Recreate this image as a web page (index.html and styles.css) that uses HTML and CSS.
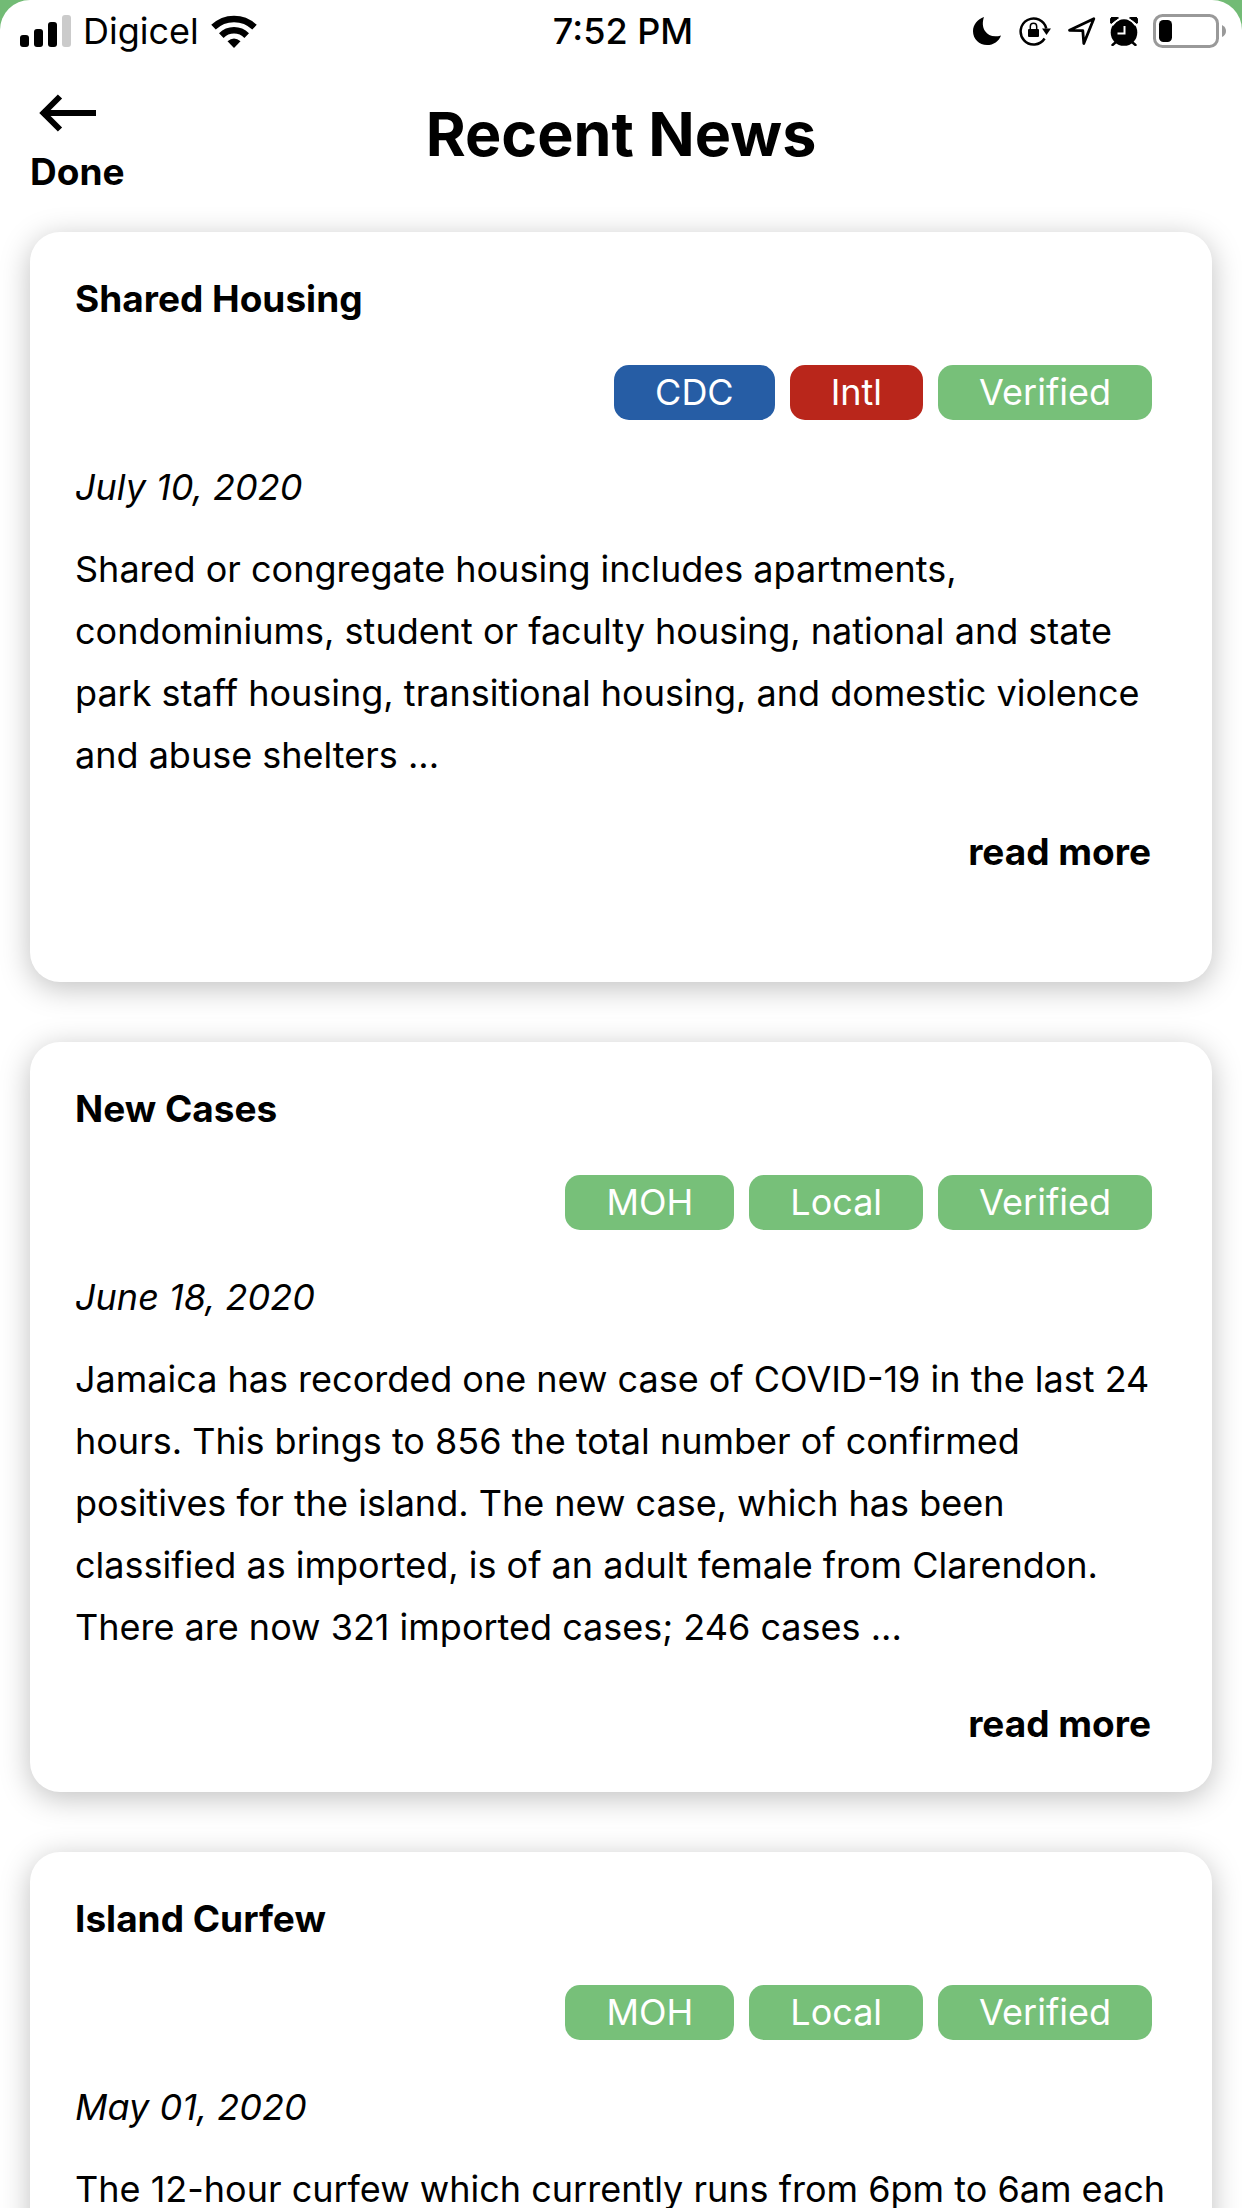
FILE: index.html
```html
<!DOCTYPE html>
<html lang="en">
<head>
<meta charset="utf-8">
<meta name="viewport" content="width=device-width, initial-scale=1">
<title>Recent News</title>
<link rel="stylesheet" href="styles.css">
</head>
<body>
<div class="screen">
  <div class="status">
    <div class="status-left">
      <svg class="signal" width="51" height="32" viewBox="0 0 51 32" aria-hidden="true">
        <rect x="0" y="20" width="9" height="12" rx="3"/>
        <rect x="14" y="14" width="9" height="18" rx="3"/>
        <rect x="28" y="7" width="9" height="25" rx="3"/>
        <rect x="42" y="0" width="9" height="32" rx="3" fill="#cbcbcb"/>
      </svg>
      <span class="carrier">Digicel</span>
      <svg width="46" height="33" viewBox="0 0 46 33" aria-hidden="true">
        <g fill="none" stroke="#000" stroke-width="6.5">
          <path d="M2.500 12.200A29.500 29.500 0 0 1 43.500 12.200"/>
          <path d="M10.300 20.600A18 18 0 0 1 35.700 20.600"/>
        </g>
        <path d="M16.500 26.300Q23 20.700 29.500 26.300L23 33Z"/>
      </svg>
    </div>
    <span class="clock">7:52 PM</span>
    <div class="status-right">
      <svg width="32" height="28" viewBox="0 0 32 28" aria-hidden="true">
        <path d="M11 0C4.500 2.200 0 7.600 0 14.300 0 22 6.200 28 14 28c6.500 0 12-3.800 14-9.600-7 2-12.800.5-16-4.400C9.300 10 9.300 4.800 11 0z"/>
      </svg>
      <svg width="35" height="30" viewBox="0 0 35 30" aria-hidden="true">
        <path d="M25.600 22.500A13 13 0 1 1 27.300 12.500" fill="none" stroke="#000" stroke-width="2.500"/>
        <path d="M23 12.500h9l-4.500 6.500z"/>
        <rect x="9" y="13" width="11" height="8" rx="1"/>
        <path d="M11.300 13.500v-3a3.200 3.200 0 0 1 6.400 0v3" fill="none" stroke="#000" stroke-width="1.500"/>
      </svg>
      <svg width="28" height="28" viewBox="0 0 28 28" aria-hidden="true">
        <path d="M1.500 13.300L25.800 1.800 15.800 26.500 14.800 13.600z" fill="none" stroke="#000" stroke-width="2.800" stroke-linejoin="round"/>
      </svg>
      <svg width="28" height="29" viewBox="0 0 28 29" aria-hidden="true">
        <circle cx="14" cy="15.500" r="13.300"/>
        <path d="M1 6.500A4.300 4.300 0 0 1 8.500 1zM27 6.500A4.300 4.300 0 0 0 19.500 1z" stroke="#000" stroke-width="1"/>
        <path d="M2.500 8.500Q5 4 10 2M25.500 8.500Q23 4 18 2" fill="none" stroke="#fff" stroke-width="1.400"/>
        <path d="M6 25l-3.500 3M22 25l3.500 3" stroke="#000" stroke-width="2.400" stroke-linecap="round"/>
        <path d="M14.500 9v7.500H7.500" fill="none" stroke="#fff" stroke-width="2"/>
      </svg>
      <svg class="battery" width="74" height="34" viewBox="0 0 74 34" aria-hidden="true">
        <rect x="2.500" y="1.500" width="63" height="31" rx="8" fill="none" stroke="#999" stroke-width="3"/>
        <rect x="7" y="6" width="13" height="22" rx="4.500"/>
        <path d="M70 11q4 2 4 6t-4 6z" fill="#999"/>
      </svg>
    </div>
  </div>

  <header class="header">
    <button class="back" type="button">
      <svg width="57" height="38" viewBox="0 0 57 38" aria-hidden="true">
        <path d="M21 2.500L4.500 19 21 35.500M5 19H57" fill="none" stroke="#000" stroke-width="6"/>
      </svg>
      <span>Done</span>
    </button>
    <h1 class="heading">Recent News</h1>
  </header>

  <main class="news">
    <article class="card">
      <h2 class="title">Shared Housing</h2>
      <div class="tags"><span class="tag blue">CDC</span><span class="tag red">Intl</span><span class="tag">Verified</span></div>
      <time class="date" datetime="2020-07-10">July 10, 2020</time>
      <p class="summary">Shared or congregate housing includes apartments,<br>condominiums, student or faculty housing, national and state<br>park staff housing, transitional housing, and domestic violence<br>and abuse shelters ...</p>
      <a class="more" href="#">read more</a>
    </article>
    <article class="card">
      <h2 class="title">New Cases</h2>
      <div class="tags"><span class="tag">MOH</span><span class="tag">Local</span><span class="tag">Verified</span></div>
      <time class="date" datetime="2020-06-18">June 18, 2020</time>
      <p class="summary">Jamaica has recorded one new case of COVID-19 in the last 24<br>hours. This brings to 856 the total number of confirmed<br>positives for the island. The new case, which has been<br>classified as imported, is of an adult female from Clarendon.<br>There are now 321 imported cases; 246 cases ...</p>
      <a class="more" href="#">read more</a>
    </article>
    <article class="card">
      <h2 class="title">Island Curfew</h2>
      <div class="tags"><span class="tag">MOH</span><span class="tag">Local</span><span class="tag">Verified</span></div>
      <time class="date" datetime="2020-05-01">May 01, 2020</time>
      <p class="summary">The 12-hour curfew which currently runs from 6pm to 6am each</p>
    </article>
  </main>
</div>
</body>
</html>
```
FILE: styles.css
```css
* { box-sizing: border-box; }

body {
  margin: 0;
  background: #72bb75;
  color: #000;
  font-family: Inter, "Liberation Sans", sans-serif;
  font-size: 36px;
  line-height: 44px;
}

svg { display: block; flex: none; }

.screen {
  display: flex;
  flex-direction: column;
  height: 100vh;
  overflow: hidden;
  background: #fff;
  border-radius: 30px 30px 0 0;
}

.status {
  display: grid;
  grid-template-columns: 1fr auto 1fr;
  align-items: center;
  flex: none;
  min-height: 62px;
  padding: 0 16px 0 20px;
}

.status-left { display: flex; align-items: center; gap: 12px; }
.clock { font-weight: 500; }

.status-right {
  display: flex;
  justify-content: flex-end;
  align-items: center;
  gap: 14px;
}

.header {
  display: grid;
  grid-template-columns: 1fr auto 1fr;
  align-items: start;
  flex: none;
  padding: 32px 30px 38px;
}

.back {
  display: flex;
  flex-direction: column;
  align-items: flex-start;
  gap: 18px;
  padding: 0;
  border: 0;
  background: none;
  color: inherit;
  font: inherit;
  font-size: 37px;
  font-weight: 700;
}

.back svg { margin-left: 9px; }

.heading {
  margin: 0;
  font-size: 61px;
  font-weight: 700;
  line-height: 80px;
}

.news {
  display: flex;
  flex-direction: column;
  flex: none;
  gap: 60px;
  padding: 0 30px;
}

.card {
  display: flex;
  flex-direction: column;
  flex: none;
  min-height: 750px;
  padding: 45px;
  border-radius: 30px;
  background: #fff;
  box-shadow: 0 6px 30px rgba(0, 0, 0, .25);
}

.title {
  margin: 0;
  font-size: 37px;
  font-weight: 700;
}

.tags {
  display: flex;
  justify-content: flex-end;
  gap: 15px;
  margin: 44px 15px 45px 0;
}

.tag {
  padding: 0 41px;
  border-radius: 15px;
  background: #77c079;
  color: #fff;
  line-height: 55px;
}

.blue { background: #265da5; }
.red { background: #b9261b; }

.date { font-style: italic; }

.summary { margin: 29px 0 44px; line-height: 62px; white-space: nowrap; }

.more {
  align-self: flex-end;
  margin-right: 16px;
  color: inherit;
  font-size: 37px;
  font-weight: 700;
  text-decoration: none;
}
```
